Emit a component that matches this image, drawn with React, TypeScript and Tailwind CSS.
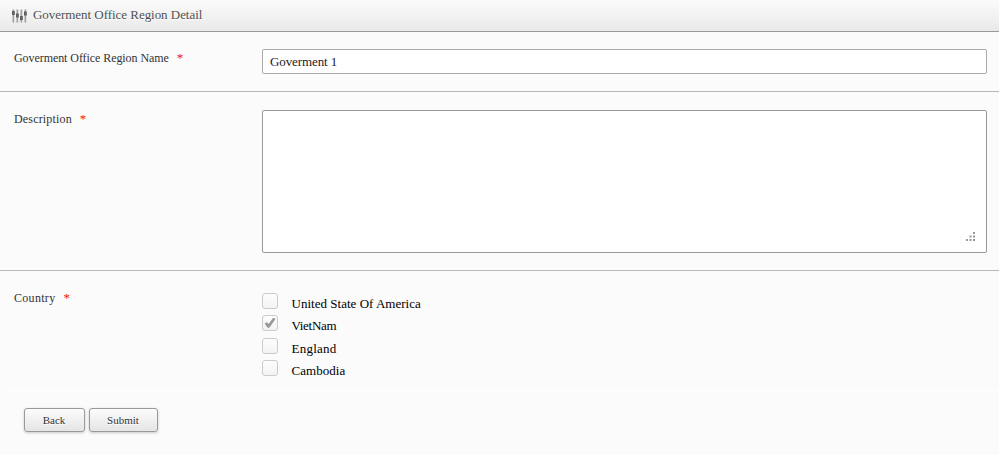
import type { ReactNode } from 'react';

const countries = [
  { name: 'United State Of America', checked: false, row: 'h-[22px]', spacing: 'tracking-[0.02px]' },
  { name: 'VietNam', checked: true, row: 'h-[23px]', spacing: 'tracking-[-0.3px]' },
  { name: 'England', checked: false, row: 'h-[22px]', spacing: 'tracking-[0.25px]' },
  { name: 'Cambodia', checked: false, row: 'h-[22px]', spacing: 'tracking-[0.04px]' },
];

function SlidersIcon() {
  return (
    <svg width="15" height="14" viewBox="0 0 15 14" className="shrink-0">
      <g fill="#a0a0a0">
        <rect x="0.5" y="0.5" width="1.7" height="13" />
        <rect x="4.5" y="0.5" width="1.7" height="13" />
        <rect x="8.5" y="0.5" width="1.7" height="13" />
        <rect x="12.5" y="0.5" width="1.7" height="13" />
      </g>
      <g fill="#606060">
        <rect x="0" y="2" width="2.8" height="4" />
        <rect x="4" y="4.5" width="2.8" height="4" />
        <rect x="8" y="7" width="2.8" height="4" />
        <rect x="12" y="2.5" width="2.8" height="4" />
      </g>
    </svg>
  );
}

function Label({ children, spacing }: { children: ReactNode; spacing: string }) {
  return (
    <div className="flex w-[248px] shrink-0 whitespace-nowrap text-[12px] leading-4 text-[#333]">
      <span className={spacing}>{children}</span>
      <span className="ml-2 text-[13px] text-[#f21108]">*</span>
    </div>
  );
}

function Checkbox({ checked }: { checked: boolean }) {
  return (
    <span className="block size-4 shrink-0 rounded-[3px] border border-[#cbcbcb] bg-linear-to-b from-[#fdfdfd] to-[#f3f3f3]">
      {checked && (
        <svg width="14" height="14" viewBox="0 0 14 14" fill="none">
          <path d="M1.6 7.4 4 6.2 5.6 8 10.2 1.8 12.6 2.8 6.4 11.8 4.6 11.8Z" fill="#999" />
        </svg>
      )}
    </span>
  );
}

function Button({ children, width }: { children: ReactNode; width: string }) {
  return (
    <button
      className={`${width} h-6 rounded-[3px] border border-[#999] bg-linear-to-b from-[#fcfcfc] to-[#e5e5e5] pr-px text-[11px] leading-[22px] text-[#333] shadow-[0_1px_3px_rgba(0,0,0,0.2)] [text-shadow:0_1px_0_#fff]`}
    >
      {children}
    </button>
  );
}

export default function App() {
  return (
    <div className="h-[455px] w-[999px] overflow-hidden bg-[#fbfbfb] font-['Liberation_Serif',serif]">
      <header className="flex h-8 items-center border-b border-[#999] bg-linear-to-b from-[#fbfbfb] to-[#e9e9e9] pl-3">
        <SlidersIcon />
        <h1 className="mb-px ml-[6px] whitespace-nowrap pb-px text-[13px] leading-4 tracking-[-0.04px] text-[#505050] [text-shadow:0_1px_0_#fff]">
          Goverment Office Region Detail
        </h1>
      </header>
      <section className="flex h-[60px] border-b border-[#b8b8b8] pl-[14px] pt-[18px]">
        <Label spacing="tracking-[-0.07px]">Goverment Office Region Name</Label>
        <input
          className="-mt-px h-[25px] w-[725px] rounded-[2px] border border-[#aaa] bg-white px-[7px] text-[13px] tracking-[-0.1px] text-[#222]"
          defaultValue="Goverment 1"
        />
      </section>
      <section className="flex h-[179px] border-b border-[#b8b8b8] pl-[14px] pt-[18px]">
        <div className="pt-px">
          <Label spacing="tracking-[0.17px]">Description</Label>
        </div>
        <div className="relative h-[143px] w-[725px] rounded-[2px] border border-[#999] bg-white">
          <svg className="absolute right-[10px] bottom-[10px]" width="11" height="11" viewBox="0 0 11 11" fill="#999">
            <rect x="8" y="1" width="2" height="2" />
            <rect x="4.5" y="4.5" width="2" height="2" />
            <rect x="8" y="4.5" width="2" height="2" />
            <rect x="1" y="8" width="2" height="2" />
            <rect x="4.5" y="8" width="2" height="2" />
            <rect x="8" y="8" width="2" height="2" />
          </svg>
        </div>
      </section>
      <section className="flex h-[119px] pl-[14px] pt-[19px]">
        <Label spacing="tracking-[0.3px]">Country</Label>
        <ul className="pt-[3px]">
          {countries.map((c) => (
            <li key={c.name} className={`flex ${c.row}`}>
              <Checkbox checked={c.checked} />
              <span className={`ml-[13.5px] mt-[3px] whitespace-nowrap text-[13px] leading-4 text-black ${c.spacing}`}>{c.name}</span>
            </li>
          ))}
        </ul>
      </section>
      <div className="ml-2 flex gap-1 border-t border-white pl-4 pt-[17px]">
        <Button width="w-[61px]">Back</Button>
        <Button width="w-[69px]">Submit</Button>
      </div>
    </div>
  );
}
